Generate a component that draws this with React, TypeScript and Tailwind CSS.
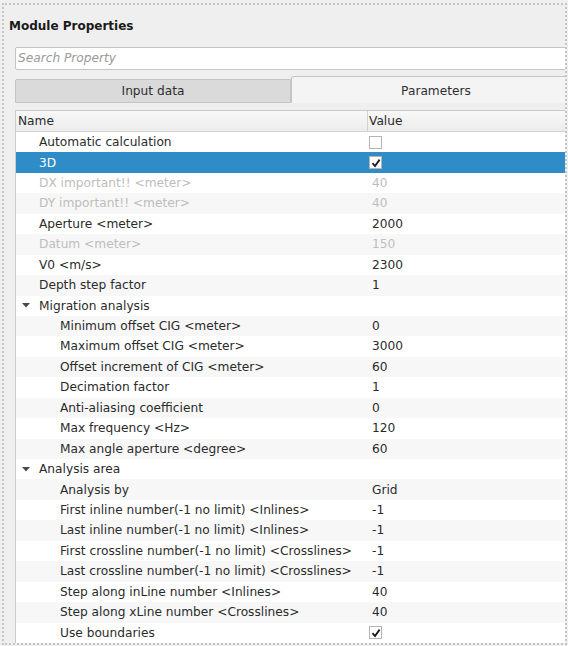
import React from 'react';

type Row = {
  name: string;
  value?: string;
  level: 0 | 1;
  group?: boolean;
  check?: boolean;
  disabled?: boolean;
  selected?: boolean;
};

const rows: Row[] = [
  { name: 'Automatic calculation', level: 0, check: false },
  { name: '3D', level: 0, check: true, selected: true },
  { name: 'DX important!! <meter>', value: '40', level: 0, disabled: true },
  { name: 'DY important!! <meter>', value: '40', level: 0, disabled: true },
  { name: 'Aperture <meter>', value: '2000', level: 0 },
  { name: 'Datum <meter>', value: '150', level: 0, disabled: true },
  { name: 'V0 <m/s>', value: '2300', level: 0 },
  { name: 'Depth step factor', value: '1', level: 0 },
  { name: 'Migration analysis', level: 0, group: true },
  { name: 'Minimum offset CIG <meter>', value: '0', level: 1 },
  { name: 'Maximum offset CIG <meter>', value: '3000', level: 1 },
  { name: 'Offset increment of CIG <meter>', value: '60', level: 1 },
  { name: 'Decimation factor', value: '1', level: 1 },
  { name: 'Anti-aliasing coefficient', value: '0', level: 1 },
  { name: 'Max frequency <Hz>', value: '120', level: 1 },
  { name: 'Max angle aperture <degree>', value: '60', level: 1 },
  { name: 'Analysis area', level: 0, group: true },
  { name: 'Analysis by', value: 'Grid', level: 1 },
  { name: 'First inline number(-1 no limit) <Inlines>', value: '-1', level: 1 },
  { name: 'Last inline number(-1 no limit) <Inlines>', value: '-1', level: 1 },
  { name: 'First crossline number(-1 no limit) <Crosslines>', value: '-1', level: 1 },
  { name: 'Last crossline number(-1 no limit) <Crosslines>', value: '-1', level: 1 },
  { name: 'Step along inLine number <Inlines>', value: '40', level: 1 },
  { name: 'Step along xLine number <Crosslines>', value: '40', level: 1 },
  { name: 'Use boundaries', level: 1, check: true },
];

function CheckBox({ checked }: { checked: boolean }) {
  return (
    <div className="w-[13px] h-[13px] bg-white border border-[#b4b4b4] flex items-center justify-center">
      {checked && (
        <svg width="10" height="10" viewBox="0 0 10 10">
          <path d="M1.5 5.2 L4 8 L8.6 1.6" fill="none" stroke="#1a1a1a" strokeWidth="1.8" />
        </svg>
      )}
    </div>
  );
}

function PropertyRow({ row, index }: { row: Row; index: number }) {
  const bg = row.selected ? 'bg-[#308cc6]' : index % 2 === 0 ? 'bg-white' : 'bg-[#f7f7f7]';
  const color = row.selected ? 'text-white' : row.disabled ? 'text-[#bdbdbd]' : 'text-[#2a2a2a]';
  return (
    <div className={`flex items-center h-[20.44px] ${bg} ${color}`}>
      <div className="w-[352px] shrink-0 flex items-center">
        {row.group ? (
          <div className="w-[23px] pl-[6px] flex items-center">
            <svg width="8" height="5" viewBox="0 0 8 5">
              <path d="M0 0 L8 0 L4 4.5 Z" fill="#4a4a4a" />
            </svg>
          </div>
        ) : (
          <div className={row.level === 1 ? 'w-[44px]' : 'w-[23px]'} />
        )}
        <span className="whitespace-nowrap">{row.name}</span>
      </div>
      <div className="pl-[1px] flex items-center">
        {row.check !== undefined ? (
          <CheckBox checked={row.check} />
        ) : (
          <span className="pl-[3px]">{row.value}</span>
        )}
      </div>
    </div>
  );
}

export default function App() {
  return (
    <div
      className="w-[568px] h-[646px] bg-[#efefef] pt-[3px] pl-[2px] pr-[1px] pb-[1px] text-[12.2px] leading-none"
      style={{ fontFamily: '"DejaVu Sans", sans-serif' }}
    >
      <div className="h-full border-2 border-dotted border-[#c6c6c6] overflow-hidden flex flex-col">
        {/* Title */}
        <div className="h-[42px] shrink-0 pl-[5px] pt-[15px] font-bold text-[12px] text-[#1a1a1a]">
          Module Properties
        </div>

        <div className="pl-[11px] flex flex-col">
          {/* Search */}
          <div className="h-[23px] w-[560px] shrink-0 bg-white border border-[#c4c4c4] rounded-[2px] flex items-center pl-[2px]">
            <span className="italic text-[#9a9a9a]">Search Property</span>
          </div>

          {/* Tabs */}
          <div className="flex items-end h-[29px] mt-[4px] shrink-0">
            <div className="w-[276px] shrink-0 h-[24px] bg-[#dadada] border border-[#c4c4c4] rounded-tl-[2px] flex items-center justify-center text-[#2e2e2e]">
              Input data
            </div>
            <div className="w-[290px] shrink-0 h-[27px] bg-[#f4f4f4] border border-b-0 border-[#c4c4c4] rounded-t-[3px] flex items-center justify-center text-[#2e2e2e] pt-[2px]">
              Parameters
            </div>
          </div>

          {/* Table */}
          <div className="mt-[7px] border-l border-t border-[#c9c9c9] flex flex-col">
            <div className="h-[21px] flex items-center bg-gradient-to-b from-[#f8f8f8] to-[#ececec] border-b border-[#d2d2d2] text-[#2a2a2a]">
              <div className="w-[352px] h-full border-r border-[#d2d2d2] pl-[2px] flex items-center">Name</div>
              <div className="pl-[1px]">Value</div>
            </div>
            {rows.map((row, i) => (
              <PropertyRow key={row.name} row={row} index={i} />
            ))}
          </div>
        </div>
      </div>
    </div>
  );
}
